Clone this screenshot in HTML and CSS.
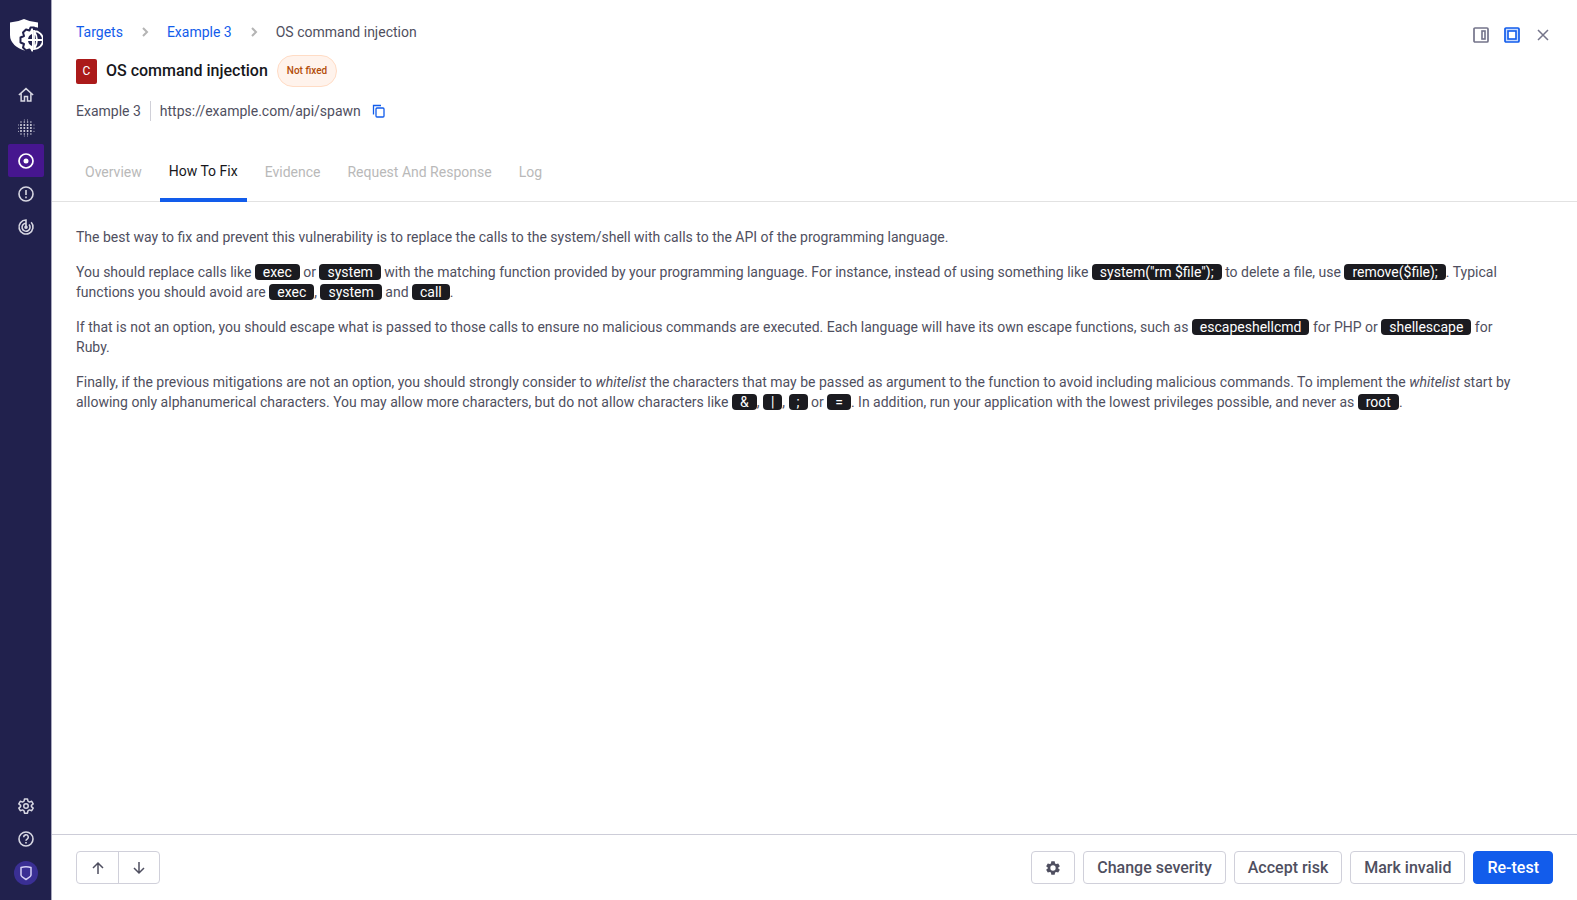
FILE: index.html
```html
<!DOCTYPE html>
<html lang="en">
<head>
  <meta charset="UTF-8" />
  <meta name="viewport" content="width=device-width, initial-scale=1.0"/>
  <title>OS command injection</title>
  <link rel="stylesheet" href="styles.css">
</head>
<body>

<nav class="sidebar" aria-label="Main">
  <a class="logo" href="#" aria-label="Dashboard">
    <svg width="34" height="36" viewBox="0 0 34 36">
      <path d="M15 1 Q21 4 29 4.500 V11 L20 12 13 19 14 28 17 33 Q1 28 1 17 V4.500 Q9 4 15 1Z" fill="#fff"/>
      <path d="M25 9.500H21.500L20.500 12.500 17 11.500 14 14.500 15 18 11.500 19.500V24.500L15 26 14 29.500 17 32.500 20.500 31.500 22 34.500H25Z" fill="#fff" stroke="#21214d" stroke-width="2" stroke-linejoin="round"/>
      <path d="M25 9V35A13 13 0 0 0 25 9Z" fill="#21214d"/>
      <path d="M23 16A6.500 6.500 0 0 0 23 28Z" fill="#21214d"/>
      <path d="M18 22H33M25 12V32M25 13A9 9 0 0 1 25 31M25 13Q31 22 25 31" fill="none" stroke="#fff" stroke-width="1.800"/>
    </svg>
  </a>

  <div class="nav-group">
    <a class="nav-item" href="#" aria-label="Home">
      <svg width="18" height="18" viewBox="0 0 24 24"><path d="M2.500 12 12 3.500 21.500 12 M5.500 10 V20 H10 V14 H14 V20 H18.500 V10" fill="none" stroke="currentColor" stroke-width="2"/></svg>
    </a>
    <a class="nav-item" href="#" aria-label="Scans">
      <svg width="18" height="18" viewBox="0 0 18 18" stroke="currentColor" stroke-linecap="round" fill="none">
        <path d="M4 6H15M4 9H15M4 12H15" stroke-width="2" stroke-dasharray="0 3.300"/>
        <path d="M4 3H15M4 15H15" stroke-width="1.500" stroke-dasharray="0 3.300"/>
        <path d="M7.300 1H11M7.300 17H11M1.500 6V12.500M17 6V12.500" stroke-width="1" stroke-dasharray="0 3.200"/>
      </svg>
    </a>
    <a class="nav-item active" href="#" aria-label="Targets">
      <svg width="18" height="18" viewBox="0 0 18 18"><circle cx="9" cy="9" r="7" fill="none" stroke="currentColor" stroke-width="1.700"/><circle cx="9" cy="9" r="2.500" fill="currentColor"/></svg>
    </a>
    <a class="nav-item" href="#" aria-label="Findings">
      <svg width="18" height="18" viewBox="0 0 18 18"><circle cx="9" cy="9" r="7" fill="none" stroke="currentColor" stroke-width="1.600"/><path d="M9 5v5M9 11.500v1.700" stroke="currentColor" stroke-width="1.600"/></svg>
    </a>
    <a class="nav-item" href="#" aria-label="Discovery">
      <svg width="18" height="18" viewBox="0 0 18 18" fill="none" stroke="currentColor" stroke-width="1.600">
        <path d="M9 9V2A7 7 0 1 0 14.200 4.300M9 5.200A4 4 0 1 0 12 6.500"/><circle cx="9" cy="9.300" r="1" fill="currentColor"/>
      </svg>
    </a>
  </div>

  <div class="nav-group">
    <a class="nav-item" href="#" aria-label="Settings">
      <svg width="18" height="18" viewBox="0 0 24 24" fill="none" stroke="currentColor" stroke-width="2" stroke-linejoin="round">
        <path d="M10 2.500h4l.6 3.100 2 1.200 3-1.100 2 3.500-2.400 2v1.600l2.400 2-2 3.500-3-1.100-2 1.200-.6 3.100h-4l-.6-3.100-2-1.200-3 1.100-2-3.500 2.400-2v-1.600l-2.400-2 2-3.500 3 1.100 2-1.200Z"/><circle cx="12" cy="12" r="3"/>
      </svg>
    </a>
    <a class="nav-item" href="#" aria-label="Help">
      <svg width="18" height="18" viewBox="0 0 18 18" fill="none" stroke="currentColor" stroke-width="1.600"><circle cx="9" cy="9" r="7"/><path d="M6.700 7.200a2.300 2.300 0 1 1 3.500 1.900Q9 9.900 9 10.800M9 12v1.600"/></svg>
    </a>
    <a class="avatar" href="#" aria-label="Account">
      <svg width="14" height="16" viewBox="0 0 14 16"><path d="M2 2.500 Q7 1 12 2.500 V10 Q12 11.500 7 14.500 Q2 11.500 2 10Z" fill="none" stroke="#d4d0f5" stroke-width="1.500" stroke-linejoin="round"/></svg>
    </a>
  </div>
</nav>

<main class="page">
  <header class="header">
    <div class="top-row">
      <nav class="breadcrumb" aria-label="Breadcrumb">
        <a href="#">Targets</a>
        <svg width="8" height="10" viewBox="0 0 8 10"><path d="M2 1l4 4-4 4"/></svg>
        <a href="#">Example 3</a>
        <svg width="8" height="10" viewBox="0 0 8 10"><path d="M2 1l4 4-4 4"/></svg>
        <span>OS command injection</span>
      </nav>
      <div class="view-actions">
        <button type="button" aria-label="Side view">
          <svg width="16" height="16" viewBox="0 0 16 16" fill="none" stroke="currentColor"><rect x="1" y="1" width="14" height="14" rx="1" stroke-width="1.700"/><rect x="9" y="4" width="3" height="8" stroke-width="1.600"/></svg>
        </button>
        <button type="button" class="selected" aria-label="Full view">
          <svg width="16" height="16" viewBox="0 0 16 16" stroke="currentColor"><rect x="1" y="1" width="14" height="14" rx="1" fill="#c9dcff" stroke-width="1.700"/><rect x="4" y="4" width="8" height="8" fill="#fff" stroke-width="1.600"/></svg>
        </button>
        <button type="button" aria-label="Close">
          <svg width="16" height="16" viewBox="0 0 16 16"><path d="M3 3l10 10M13 3L3 13" stroke="currentColor" stroke-width="1.500"/></svg>
        </button>
      </div>
    </div>

    <div class="title-row">
      <span class="severity">C</span>
      <h1>OS command injection</h1>
      <span class="status">Not fixed</span>
    </div>

    <div class="target-row">
      <span class="target-name">Example 3</span>
      <span>https://example.com/api/spawn</span>
      <button type="button" aria-label="Copy URL">
        <svg width="14" height="14" viewBox="0 0 14 14" fill="none" stroke="currentColor" stroke-width="1.300"><path d="M1.500 10.500V1.500H9"/><rect x="4" y="4" width="8" height="9" rx="1"/></svg>
      </button>
    </div>
  </header>

  <nav class="tabs" aria-label="Finding details">
    <a href="#">Overview</a>
    <a href="#" class="current">How To Fix</a>
    <a href="#">Evidence</a>
    <a href="#">Request And Response</a>
    <a href="#">Log</a>
  </nav>

  <section class="content">
    <p>The best way to fix and prevent this vulnerability is to replace the calls to the system/shell with calls to the API of the programming language.</p>
    <p>You should replace calls like <code>exec</code> or <code>system</code> with the matching function provided by your programming language. For instance, instead of using something like <code>system("rm $file");</code> to delete a file, use <code>remove($file);</code>. Typical functions you should avoid are <code>exec</code>, <code>system</code> and <code>call</code>.</p>
    <p>If that is not an option, you should escape what is passed to those calls to ensure no malicious commands are executed. Each language will have its own escape functions, such as <code>escapeshellcmd</code> for PHP or <code>shellescape</code> for Ruby.</p>
    <p>Finally, if the previous mitigations are not an option, you should strongly consider to <em>whitelist</em> the characters that may be passed as argument to the function to avoid including malicious commands. To implement the <em>whitelist</em> start by allowing only alphanumerical characters. You may allow more characters, but do not allow characters like <code>&amp;</code>, <code>|</code>, <code>;</code> or <code>=</code>. In addition, run your application with the lowest privileges possible, and never as <code>root</code>.</p>
  </section>

  <footer class="footer">
    <div class="pager">
      <button type="button" aria-label="Previous finding">
        <svg width="14" height="14" viewBox="0 0 14 14"><path d="M7 13V2M2 7l5-5 5 5"/></svg>
      </button>
      <button type="button" aria-label="Next finding">
        <svg width="14" height="14" viewBox="0 0 14 14"><path d="M7 1v11M2 7l5 5 5-5"/></svg>
      </button>
    </div>
    <div class="actions">
      <button type="button" class="btn" aria-label="Finding settings">
        <svg width="16" height="16" viewBox="0 0 24 24"><path fill="currentColor" fill-rule="evenodd" d="M9.500 2h5l.6 3.100 1.700 1 3-1 2.500 4.300-2.400 2v1.200l2.400 2-2.500 4.300-3-1-1.700 1-.6 3.100h-5l-.6-3.100-1.700-1-3 1-2.500-4.300 2.400-2v-1.200l-2.400-2 2.500-4.300 3 1 1.700-1ZM12 8a4 4 0 1 0 0 8a4 4 0 1 0 0-8Z"/></svg>
      </button>
      <button type="button" class="btn">Change severity</button>
      <button type="button" class="btn">Accept risk</button>
      <button type="button" class="btn">Mark invalid</button>
      <button type="button" class="btn primary">Re-test</button>
    </div>
  </footer>
</main>

</body>
</html>
```

FILE: styles.css
```css
* {
  box-sizing: border-box;
}
body {
  margin: 0;
  min-height: 100vh;
  display: flex;
  font-family: Roboto, sans-serif;
  font-size: 14px;
  line-height: 20px;
  color: #4f4f60;
  background: #fff;
}
a {
  color: #125ceb;
  text-decoration: none;
}
button {
  font-family: inherit;
  color: inherit;
  background: none;
  border: none;
  padding: 0;
  cursor: pointer;
}
svg {
  display: block;
  flex: none;
}

/* Sidebar */
.sidebar {
  width: 52px;
  flex: none;
  display: flex;
  flex-direction: column;
  align-items: center;
  padding: 18px 0 15px;
  background: #21214d;
  border-right: 1px solid #a9a9bd;
}
.logo {
  margin-bottom: 24px;
}
.nav-group {
  display: flex;
  flex-direction: column;
  align-items: center;
}
.nav-group:last-child {
  margin-top: auto;
}
.nav-item {
  width: 36px;
  height: 33px;
  display: flex;
  align-items: center;
  justify-content: center;
  border-radius: 2px;
  color: #d7d7e2;
}
.nav-item.active {
  background: #46168f;
  color: #fff;
}
.avatar {
  width: 24px;
  height: 24px;
  margin-top: 6px;
  display: flex;
  align-items: center;
  justify-content: center;
  border-radius: 50%;
  background: #3a2f94;
}

/* Header */
.page {
  flex: 1;
  min-width: 0;
  display: flex;
  flex-direction: column;
}
.header {
  padding: 21px 24px 0;
}
.top-row {
  display: flex;
  justify-content: space-between;
}
.breadcrumb {
  display: flex;
  align-items: center;
  gap: 18px;
}
.breadcrumb svg {
  fill: none;
  stroke: #b4b4b4;
  stroke-width: 2;
}
.view-actions {
  display: flex;
  gap: 15px;
  padding-top: 6px;
  margin-right: 2px;
  color: #74748a;
}
.view-actions .selected {
  color: #125ceb;
}
.title-row {
  display: flex;
  align-items: center;
  gap: 9px;
  margin-top: 12px;
}
.severity {
  width: 21px;
  height: 25px;
  border-radius: 2px;
  background: #ab1a1a;
  color: #fff;
  font-size: 12px;
  line-height: 25px;
  text-align: center;
}
h1 {
  margin: 0;
  font-size: 16px;
  font-weight: 500;
  color: #17171c;
}
.status {
  padding: 5px 9px;
  border: 1px solid #ffdcc5;
  border-radius: 16px;
  background: #fff3ec;
  color: #b34d09;
  font-size: 10px;
  font-weight: 500;
}
.target-row {
  display: flex;
  align-items: center;
  margin-top: 14px;
}
.target-name {
  padding-right: 9px;
  margin-right: 9px;
  border-right: 1px solid #d0d0d8;
}
.target-row button {
  margin-left: 11px;
  color: #125ceb;
}

/* Tabs */
.tabs {
  display: flex;
  gap: 9px;
  margin-top: 23px;
  padding: 0 24px;
  border-bottom: 1px solid #e2e2e2;
}
.tabs a {
  padding: 18px 9px 19px;
  color: #b9b9b9;
}
.tabs .current {
  padding: 17px 9px 16px;
  margin-bottom: -1px;
  border-bottom: 4px solid #125ceb;
  color: #17171c;
}

/* Content */
.content {
  flex: 1;
  padding: 25px 64px 24px 24px;
}
.content p {
  margin: 0 0 15px;
}
code {
  padding: 0 8px;
  border-radius: 4px;
  background: #1b1b20;
  color: #fff;
  font-family: inherit;
  font-size: inherit;
}

/* Footer */
.footer {
  display: flex;
  justify-content: space-between;
  padding: 16px 24px;
  border-top: 1px solid #cdcdd8;
}
.pager {
  display: flex;
  border: 1px solid #d0d0da;
  border-radius: 4px;
}
.pager button {
  width: 41px;
  display: flex;
  align-items: center;
  justify-content: center;
}
.pager button + button {
  border-left: 1px solid #d0d0da;
}
.pager svg {
  fill: none;
  stroke: currentColor;
  stroke-width: 1.5;
}
.actions {
  display: flex;
  gap: 8px;
}
.btn {
  height: 33px;
  padding: 0 13px;
  border: 1px solid #d0d0da;
  border-radius: 4px;
  font-size: 16px;
  font-weight: 500;
}
.btn.primary {
  border-color: #125ceb;
  background: #125ceb;
  color: #fff;
}
```
